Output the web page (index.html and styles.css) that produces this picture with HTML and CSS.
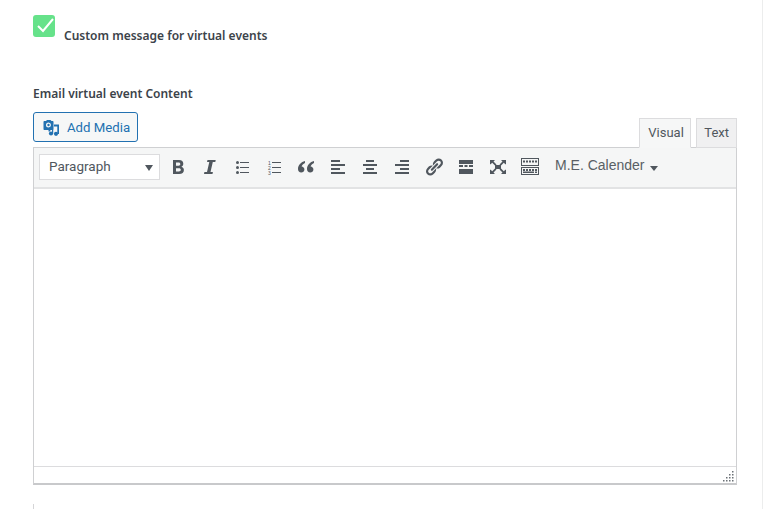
FILE: index.html
```html
<!DOCTYPE html>
<html lang="en">
<head>
<meta charset="utf-8">
<title>Custom message</title>
<link rel="stylesheet" href="styles.css">
</head>
<body>
<main class="page">
  <label class="check-row">
    <span class="checkbox">
      <svg width="22" height="22" viewBox="0 0 22 22"><path d="M5 11l5 5 10-12" fill="none" stroke="#fff" stroke-width="2"/></svg>
    </span>
    <span class="check-label">Custom message for virtual events</span>
  </label>
  <h2 class="field-title">Email virtual event Content</h2>
  <div class="editor-head">
    <button class="add-media" type="button">
      <svg class="media-icon" width="18" height="18" viewBox="0 0 18 18" fill="#2271b1"><path fill-rule="evenodd" d="M1.500 3H3l1-1h3.500l1 1h1c.6 0 1 .4 1 1v7c0 .6-.4 1-1 1H7.500l-.5 1.500H5.500V12h-4c-.6 0-1-.4-1-1V4c0-.6.4-1 1-1zM5.500 4.500a2.500 2.500 0 1 0 0 5 2.500 2.500 0 0 0 0-5z"/><circle cx="5.500" cy="7" r="1.200"/><circle cx="8" cy="15.500" r="2.100"/><path d="M9 11.500h1.200v4H9z"/><circle cx="13" cy="15.800" r="2.100"/><path d="M11 6.500h5v9.500h-1.700V8.500H11z"/></svg>
      <span>Add Media</span>
    </button>
    <div class="tabs">
      <span class="tab tab-active">Visual</span>
      <span class="tab">Text</span>
    </div>
  </div>
  <section class="editor">
    <div class="toolbar">
      <div class="format-select">Paragraph<i class="caret"></i></div>
      <div class="tools">
        <svg class="tool" viewBox="0 0 20 20"><path fill-rule="evenodd" d="M5 3h6c3 0 4.300 1.500 4.300 3.700 0 1.500-.8 2.500-1.900 3 1.500.4 2.500 1.600 2.500 3.300 0 2.500-1.700 4-4.700 4H5zm3 2.500v3.300h2.500c1.200 0 1.800-.6 1.800-1.700 0-1-.6-1.600-1.800-1.600zm0 5.700v3.300h2.800c1.300 0 2-.6 2-1.700 0-1-.7-1.600-2-1.600z"/></svg>
        <svg class="tool" viewBox="0 0 20 20"><path d="M7.500 3h8.200l-.4 2h-2.500l-2.300 10h2.400l-.4 2H4l.4-2h2.600L9.300 5H7z"/></svg>
        <svg class="tool" viewBox="0 0 20 20"><circle cx="5.500" cy="5.500" r="1.500"/><circle cx="5.500" cy="10.500" r="1.500"/><circle cx="5.500" cy="15.500" r="1.500"/><path d="M8 5h9v1H8zM8 10h9v1H8zM8 15h9v1H8z"/></svg>
        <svg class="tool" viewBox="0 0 20 20"><path d="M8 5h9v1H8zM8 10h9v1H8zM8 15h9v1H8z"/><text class="ol-num" x="4" y="7.500">1</text><text class="ol-num" x="4" y="12.500">2</text><text class="ol-num" x="4" y="17.500">3</text></svg>
        <svg class="tool" viewBox="0 0 20 20"><path d="M9 4C5 5 2 8 2 12c0 2.200 1.300 3.600 3.200 3.600 1.800 0 3.200-1.300 3.200-3.100 0-1.700-1.200-2.900-2.800-3 .4-1.400 1.700-2.800 3.400-3.500zM18 4c-4 1-7 4-7 8 0 2.200 1.300 3.600 3.200 3.600 1.800 0 3.200-1.300 3.200-3.100 0-1.700-1.200-2.900-2.800-3 .4-1.400 1.700-2.800 3.400-3.500z"/></svg>
        <svg class="tool" viewBox="0 0 20 20"><path d="M3 3h9v2H3zM3 7h14v2H3zM3 11h9v2H3zM3 15h14v2H3z"/></svg>
        <svg class="tool" viewBox="0 0 20 20"><path d="M6 3h8v2H6zM3 7h14v2H3zM6 11h8v2H6zM3 15h14v2H3z"/></svg>
        <svg class="tool" viewBox="0 0 20 20"><path d="M8 3h9v2H8zM3 7h14v2H3zM8 11h9v2H8zM3 15h14v2H3z"/></svg>
        <svg class="tool" viewBox="0 0 20 20"><path d="M17.740 2.760c1.680 1.690 1.680 4.410 0 6.100l-1.530 1.520c-1.120 1.120-2.700 1.470-4.140 1.090l2.620-2.610.76-.77.76-.76c.84-.84.84-2.200 0-3.040-.84-.85-2.200-.85-3.040 0l-.77.76-3.380 3.380c-.37-1.440-.02-3.020 1.100-4.140l1.520-1.530c1.690-1.680 4.420-1.680 6.100 0zM8.590 13.430l5.340-5.340c.42-.42.42-1.100 0-1.520-.44-.43-1.130-.39-1.530 0l-5.330 5.340c-.42.42-.42 1.100 0 1.520.39.39 1.100.43 1.520 0zm-.76 2.290l4.140-4.150c.38 1.440.03 3.020-1.090 4.140l-1.520 1.530c-1.690 1.680-4.410 1.680-6.100 0-1.680-1.680-1.680-4.420 0-6.100l1.530-1.520c1.120-1.120 2.700-1.470 4.140-1.100l-4.140 4.150c-.85.84-.85 2.200 0 3.050.84.84 2.200.84 3.040 0z"/></svg>
        <svg class="tool" viewBox="0 0 20 20"><path d="M3 3h14v4H3zM3 8h4v2H3zM8.500 8h3v2h-3zM13 8h4v2h-4zM3 12h14v5H3z"/></svg>
        <svg class="tool" viewBox="0 0 20 20"><path d="M7 8h6v4H7zM2 3h5L5.500 4.500l3 3-1.300 1.300-3-3L2.700 7.300H2zM18 3v4.300h-.7L15.800 5.800l-3 3-1.300-1.300 3-3L13 3zM2 17v-4.300h.7l1.500 1.500 3-3 1.300 1.300-3 3L7 17zM18 17h-5l1.500-1.500-3-3 1.300-1.300 3 3 1.500-1.500h.7z"/></svg>
        <svg class="tool" viewBox="0 0 20 20"><path fill-rule="evenodd" d="M1 1h18v8H1zm1 1v6h16V2zM1 10h18v8H1zm1 1v6h16v-6z"/><path d="M3 3.500h2v2H3zM6 3.500h2v2H6zM9 3.500h2v2H9zM12 3.500h2v2h-2zM15 3.500h2v2h-2zM3 12h2v2H3zM6 12h2v2H6zM9 12h2v2H9zM12 12h2v2h-2zM15 12h2v2h-2zM3 14.500h11v1.500H3zM15 14.500h2v1.500h-2z"/></svg>
      </div>
      <div class="calendar-menu">M.E. Calender<i class="caret caret-small"></i></div>
    </div>
    <div class="edit-area"></div>
    <div class="status-bar">
      <svg class="resize" width="12" height="12" viewBox="0 0 12 12" fill="#6b7176"><path d="M9 1h1.500v1.500H9zM6 4h1.500v1.500H6zM9 4h1.500v1.500H9zM3 7h1.500v1.500H3zM6 7h1.500v1.500H6zM9 7h1.500v1.500H9zM0 10h1.500v1.500H0zM3 10h1.500v1.500H3zM6 10h1.500v1.500H6zM9 10h1.500v1.500H9z"/></svg>
    </div>
  </section>
  <div class="next-field"></div>
</main>
<div class="page-edge"></div>
</body>
</html>
```
FILE: styles.css
```css
* { box-sizing: border-box; }
html, body { margin: 0; height: 100%; overflow: hidden; background: #fff; }
body { font-family: "Noto Sans", "Open Sans", sans-serif; color: #3c434a; position: relative; }
.page { width: 737px; padding: 15px 0 0 33px; }
.check-row { display: flex; align-items: flex-end; gap: 9px; height: 29px; }
.checkbox { width: 22px; height: 22px; margin-bottom: 7px; background: #66e28a; border-radius: 3px; display: block; }
.checkbox svg { display: block; }
.check-label { font-size: 12px; font-weight: 600; line-height: 16px; }
.field-title { margin: 42px 0 0; font-size: 12px; font-weight: 600; line-height: 16px; }
.editor-head { display: flex; justify-content: space-between; align-items: flex-end; margin-top: 10px; height: 35px; }
.add-media { display: flex; align-items: center; gap: 6px; align-self: flex-start; width: 105px; height: 30px; padding: 0 0 0 9px; background: #f6f7f7; border: 1px solid #2271b1; border-radius: 3px; color: #2271b1; font: 400 13.2px "Roboto", sans-serif; white-space: nowrap; }
.media-icon { flex: none; }
.tabs { display: flex; gap: 5px; margin-bottom: -1px; }
.tab { display: block; height: 30px; padding: 0 7px; background: #f0f0f1; border: 1px solid #dcdcde; font: 400 13px/28px "Roboto", sans-serif; color: #50575e; }
.tab-active { position: relative; width: 52px; padding: 0 8px; background: #f6f7f7; border-bottom-color: #f6f7f7; }
.editor { border: 1px solid #cfd0d2; border-bottom: 2px solid #c8c9cb; height: 338px; display: flex; flex-direction: column; }
.toolbar { display: flex; align-items: center; height: 41px; padding: 0 0 1px 5px; background: #f5f6f6; border-bottom: 2px solid #e2e3e4; }
.format-select { position: relative; width: 121px; height: 26px; padding-left: 9px; background: #fff; border: 1px solid #dcdcde; font: 400 13.5px/23px "Roboto", sans-serif; color: #50575e; }
.caret { position: absolute; right: 6px; top: 10px; width: 0; height: 0; border: 4.500px solid transparent; border-top: 6px solid #50575e; border-bottom: 0; }
.tools { display: flex; gap: 12px; margin-left: 8px; }
.tool { display: block; width: 20px; height: 20px; fill: #50575e; }
.ol-num { font: 5px "Liberation Sans", sans-serif; }
.calendar-menu { position: relative; margin: 0 0 4px 15px; padding-right: 14px; font: 400 14px/18px "Liberation Sans", sans-serif; color: #595f65; }
.caret-small { right: 0; top: 10px; border-width: 5px 4px 0; border-top-color: #50575e; }
.edit-area { flex: 1; background: #fff; }
.status-bar { position: relative; height: 17px; border-top: 1px solid #dcdcde; }
.resize { position: absolute; right: 1px; bottom: 1px; }
.next-field { width: 1px; height: 6px; margin-top: 19px; background: #d5d5d7; }
.page-edge { position: absolute; top: 0; right: 0; bottom: 0; width: 1px; background: #eceded; }
```
